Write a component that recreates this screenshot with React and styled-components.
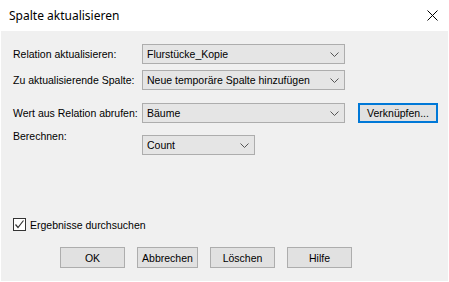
import React from 'react'
import styled, { createGlobalStyle } from 'styled-components'

const GlobalStyle = createGlobalStyle`
  html, body {
    margin: 0;
    padding: 0;
    width: 449px;
    height: 282px;
    overflow: hidden;
    background: #ffffff;
  }
  #root {
    width: 449px;
    height: 282px;
  }
`

const Dialog = styled.div`
  width: 449px;
  height: 282px;
  display: flex;
  flex-direction: column;
  background: #ffffff;
  box-sizing: border-box;
`

const TitleBar = styled.div`
  height: 31px;
  display: flex;
  align-items: center;
  justify-content: space-between;
  padding: 0 11px 0 9px;
  font-family: "Noto Sans", "Open Sans", sans-serif;
  font-size: 12px;
  color: #000;
  flex-shrink: 0;
`

const Body = styled.div`
  flex: 1;
  margin: 0 1px 1px 1px;
  background: #f0f0f0;
  padding: 13px 0 0 12px;
  font-family: "Liberation Sans", Arial, sans-serif;
  font-size: 10.5px;
  color: #000;
  display: flex;
  flex-direction: column;
`

const Row = styled.div`
  display: flex;
  align-items: ${p => (p.$top ? 'flex-start' : 'center')};
  height: 20px;
  margin-top: ${p => p.$mt || 0}px;
`

const Label = styled.div`
  width: 129px;
  flex-shrink: 0;
  white-space: nowrap;
  margin-top: ${p => p.$shift || 0}px;
`

const Select = styled.div`
  width: ${p => p.$w}px;
  height: 20px;
  box-sizing: border-box;
  border: 1px solid #adadad;
  background: #e5e5e5;
  display: flex;
  align-items: center;
  justify-content: space-between;
  padding: 0 5px 0 4px;
  white-space: nowrap;
`

const Button = styled.div`
  width: ${p => p.$w || 65}px;
  height: ${p => p.$h || 21}px;
  box-sizing: border-box;
  border: ${p => (p.$focus ? '2px solid #0078d7' : '1px solid #adadad')};
  background: #e1e1e1;
  display: flex;
  align-items: center;
  justify-content: center;
  white-space: nowrap;
`

const Spacer = styled.div`
  width: 13px;
`

const CheckRow = styled.div`
  display: flex;
  align-items: center;
  gap: 4px;
  margin-top: 63px;
  height: 13px;
`

const Box = styled.div`
  width: 13px;
  height: 13px;
  box-sizing: border-box;
  border: 1px solid #333;
  background: #fff;
  display: flex;
  align-items: center;
  justify-content: center;
`

const ButtonRow = styled.div`
  display: flex;
  gap: 12px;
  margin-top: 16px;
  padding-left: 47px;
`

const Chevron = () => (
  <svg width="9" height="5" viewBox="0 0 9 5">
    <path d="M0.5 0.5 L4.5 4.5 L8.5 0.5" fill="none" stroke="#555" strokeWidth="1" />
  </svg>
)

const Close = () => (
  <svg width="11" height="11" viewBox="0 0 11 11">
    <path d="M0.5 0.5 L10.5 10.5 M10.5 0.5 L0.5 10.5" stroke="#000" strokeWidth="1" />
  </svg>
)

const Check = () => (
  <svg width="11" height="11" viewBox="0 0 11 11">
    <path d="M1.5 5.5 L4 8.5 L9.5 1.5" fill="none" stroke="#333" strokeWidth="1.2" />
  </svg>
)

const App = () => {
  return (
    <Dialog>
      <GlobalStyle />
      <TitleBar>
        <span>Spalte aktualisieren</span>
        <Close />
      </TitleBar>
      <Body>
        <Row>
          <Label>Relation aktualisieren:</Label>
          <Select $w={203}>Flurstücke_Kopie<Chevron /></Select>
        </Row>
        <Row $mt={6}>
          <Label>Zu aktualisierende Spalte:</Label>
          <Select $w={203}>Neue temporäre Spalte hinzufügen<Chevron /></Select>
        </Row>
        <Row $mt={13}>
          <Label>Wert aus Relation abrufen:</Label>
          <Select $w={203}>Bäume<Chevron /></Select>
          <Spacer />
          <Button $w={80} $h={20} $focus>Verknüpfen...</Button>
        </Row>
        <Row $mt={12} $top>
          <Label $shift={-5}>Berechnen:</Label>
          <Select $w={113}>Count<Chevron /></Select>
        </Row>
        <CheckRow>
          <Box><Check /></Box>
          <span>Ergebnisse durchsuchen</span>
        </CheckRow>
        <ButtonRow>
          <Button>OK</Button>
          <Button $w={61}>Abbrechen</Button>
          <Button>Löschen</Button>
          <Button>Hilfe</Button>
        </ButtonRow>
      </Body>
    </Dialog>
  )
}

export default App
